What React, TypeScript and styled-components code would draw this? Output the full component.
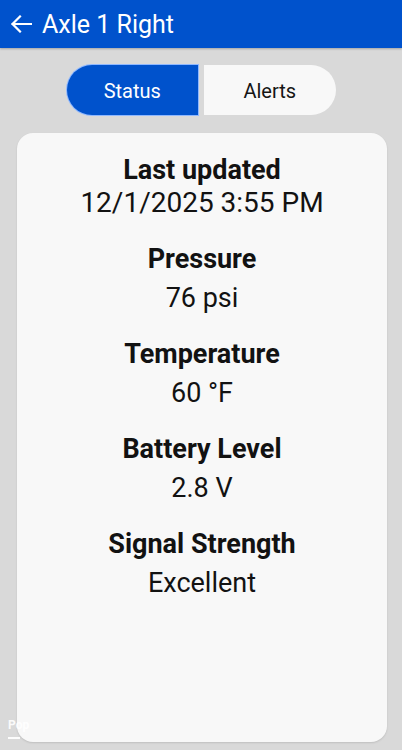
import React, { useState } from 'react';
import styled, { createGlobalStyle } from 'styled-components';

const GlobalStyle = createGlobalStyle`
  html, body {
    margin: 0;
    padding: 0;
    background: #d9d9d9;
    font-family: Roboto, 'Noto Sans', Arial, sans-serif;
  }
  * {
    box-sizing: border-box;
  }
`;

const Screen = styled.div`
  position: relative;
  width: 402px;
  height: 750px;
  overflow: hidden;
  background: #d9d9d9;
  display: flex;
  flex-direction: column;
`;

const AppBar = styled.header`
  height: 48px;
  flex-shrink: 0;
  background: #0052cc;
  display: flex;
  align-items: center;
  gap: 10px;
  padding: 0 0 0 10px;
  box-shadow: 0 1px 2px rgba(0, 0, 0, 0.25);
`;

const BackButton = styled.button`
  background: none;
  border: none;
  padding: 0;
  width: 22px;
  height: 18px;
  display: flex;
  align-items: center;
  cursor: pointer;
`;

const Title = styled.h1`
  margin: 0;
  color: #ffffff;
  font-size: 25px;
  font-weight: 400;
  line-height: 1;
`;

const Segmented = styled.div`
  align-self: center;
  margin-top: 17px;
  width: 269px;
  height: 50px;
  display: flex;
  gap: 6px;
`;

const Segment = styled.button<{ active: boolean; side: 'left' | 'right' }>`
  flex: 1;
  border: none;
  padding: 2px 0 0;
  font-family: inherit;
  font-size: 20px;
  cursor: pointer;
  background: ${({ active }) => (active ? '#0052cc' : '#f8f8f8')};
  color: ${({ active }) => (active ? '#ffffff' : '#151515')};
  border-radius: ${({ side }) => (side === 'left' ? '25px 0 0 25px' : '0 25px 25px 0')};
  box-shadow: ${({ active }) => (active ? '0 0 0 1px #8fb8ff' : 'none')};
`;

const Card = styled.section`
  margin: 18px 15px 8px 17px;
  flex: 1;
  background: #f8f8f8;
  border-radius: 16px;
  box-shadow: 0 1px 2px rgba(0, 0, 0, 0.12);
  padding-top: 21px;
  display: flex;
  flex-direction: column;
  align-items: center;
  gap: 24px;
`;

const Item = styled.div`
  display: flex;
  flex-direction: column;
  align-items: center;
  color: #121212;
`;

const Label = styled.div`
  font-size: 27px;
  font-weight: 700;
  line-height: 32px;
`;

const Value = styled.div<{ large?: boolean }>`
  font-size: ${({ large }) => (large ? '28px' : '27px')};
  font-weight: 400;
  line-height: 32px;
  margin-top: ${({ large }) => (large ? '1px' : '7px')};
`;

const Watermark = styled.div`
  position: absolute;
  left: 8px;
  bottom: 18px;
  color: rgba(255, 255, 255, 0.9);
  font-size: 12px;
  font-weight: 700;
  &::after {
    content: '';
    position: absolute;
    left: 0;
    top: 19px;
    width: 12px;
    height: 2px;
    background: rgba(255, 255, 255, 0.9);
  }
`;

const readings = [
  { label: 'Last updated', value: '12/1/2025 3:55 PM', large: true },
  { label: 'Pressure', value: '76 psi' },
  { label: 'Temperature', value: '60 °F' },
  { label: 'Battery Level', value: '2.8 V' },
  { label: 'Signal Strength', value: 'Excellent' },
];

const App: React.FC = () => {
  const [tab, setTab] = useState<'status' | 'alerts'>('status');

  return (
    <>
      <GlobalStyle />
      <Screen>
        <AppBar>
          <BackButton aria-label="Back">
            <svg width="22" height="18" viewBox="0 0 22 18" fill="none">
              <path
                d="M21 9H2.5M10 1.5L2.5 9L10 16.5"
                stroke="#ffffff"
                strokeWidth="2.2"
                strokeLinecap="square"
              />
            </svg>
          </BackButton>
          <Title>Axle 1 Right</Title>
        </AppBar>

        <Segmented>
          <Segment side="left" active={tab === 'status'} onClick={() => setTab('status')}>
            Status
          </Segment>
          <Segment side="right" active={tab === 'alerts'} onClick={() => setTab('alerts')}>
            Alerts
          </Segment>
        </Segmented>

        <Card>
          {readings.map((r) => (
            <Item key={r.label}>
              <Label>{r.label}</Label>
              <Value large={r.large}>{r.value}</Value>
            </Item>
          ))}
        </Card>

        <Watermark>Pop</Watermark>
      </Screen>
    </>
  );
};

export default App;
